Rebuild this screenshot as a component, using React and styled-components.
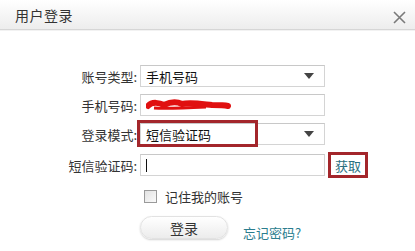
import React from 'react';
import styled, { createGlobalStyle } from 'styled-components';

const GlobalStyle = createGlobalStyle`
  html, body {
    margin: 0;
    padding: 0;
    background: #fff;
  }
  body {
    font-family: "Noto Sans CJK SC", "Liberation Sans", sans-serif;
    color: #333;
  }
`;

const Dialog = styled.div`
  width: 415px;
  height: 251px;
  background: #fff;
  overflow: hidden;
`;

const Header = styled.header`
  height: 29px;
  display: flex;
  align-items: center;
  justify-content: space-between;
  padding: 0 8px 0 15px;
  background: linear-gradient(#ffffff, #ededed);
  border-bottom: 1px solid #d6d6d6;
  box-shadow: 0 1px 0 #f2f2f2;
`;

const Title = styled.h1`
  margin: 0;
  font-size: 14px;
  font-weight: normal;
  color: #333;
  letter-spacing: 0.5px;
`;

const Close = styled.button`
  border: 0;
  background: none;
  padding: 0;
  width: 14px;
  height: 14px;
  margin-top: 6px;
  display: flex;
  cursor: pointer;
`;

const Form = styled.div`
  display: grid;
  grid-template-columns: 137px 185px auto;
  column-gap: 3px;
  row-gap: 7px;
  padding-top: 35px;
  align-items: center;
`;

const Label = styled.label`
  justify-self: end;
  font-size: 13px;
  color: #333;
  white-space: nowrap;
`;

const Field = styled.div`
  position: relative;
  height: 20px;
  border: 1px solid #d4d4d4;
  border-top-color: #c8c8c8;
  background: #fff;
  display: flex;
  align-items: center;
  padding: 0 10px 0 5px;
  font-size: 13px;
  color: #111;
`;

const Arrow = styled.span`
  margin-left: auto;
  width: 0;
  height: 0;
  border-left: 5px solid transparent;
  border-right: 5px solid transparent;
  border-top: 6px solid #444;
`;

const Highlight = styled.span`
  position: absolute;
  left: -4px;
  top: -4px;
  width: 115px;
  height: 21px;
  border: 3px solid #a3262b;
  pointer-events: none;
`;

const Caret = styled.span`
  width: 1px;
  height: 13px;
  background: #111;
`;

const GetButton = styled.button`
  justify-self: start;
  width: 40px;
  height: 26px;
  border: 3px solid #a3262b;
  background: #fff;
  color: #2a6f80;
  font-family: inherit;
  font-size: 13px;
  padding: 0;
`;

const Remember = styled.label`
  grid-column: 2 / 4;
  display: flex;
  align-items: center;
  gap: 8px;
  padding-left: 4px;
  margin-top: 2px;
  font-size: 13px;
  color: #333;
`;

const Box = styled.span`
  width: 11px;
  height: 11px;
  border: 1px solid #9a9a9a;
  background: linear-gradient(135deg, #e2e2e2, #fafafa);
`;

const Actions = styled.div`
  grid-column: 2 / 4;
  display: flex;
  align-items: flex-end;
  gap: 15px;
  margin-top: 3px;
`;

const LoginButton = styled.button`
  width: 88px;
  height: 23px;
  border: 1px solid #e2e2e2;
  border-radius: 12px;
  background: linear-gradient(#ffffff, #ececec);
  box-shadow: 0 1px 2px rgba(0, 0, 0, 0.18);
  font-family: inherit;
  font-size: 14px;
  color: #333;
  padding: 0;
`;

const Forgot = styled.a`
  font-size: 13px;
  color: #2a7d8e;
  text-decoration: none;
  margin-bottom: -3px;
`;

const Scribble = () => (
  <svg width="86" height="14" viewBox="0 0 86 14">
    <path
      d="M2 8 C6 3 14 5 18 7 C24 4 30 3 36 6 C44 4 56 6 66 7 C72 7 78 7 82 8"
      stroke="#e01010"
      strokeWidth="6"
      strokeLinecap="round"
      fill="none"
    />
    <path d="M8 10 C20 11 40 10 60 9" stroke="#e01010" strokeWidth="3" fill="none" />
  </svg>
);

export default function App() {
  return (
    <Dialog>
      <GlobalStyle />
      <Header>
        <Title>用户登录</Title>
        <Close aria-label="关闭">
          <svg width="13" height="13" viewBox="0 0 13 13">
            <path d="M1 1 L12 12 M12 1 L1 12" stroke="#7a7a7a" strokeWidth="1.6" />
          </svg>
        </Close>
      </Header>
      <Form>
        <Label>账号类型:</Label>
        <Field>
          手机号码
          <Arrow />
        </Field>
        <span />

        <Label>手机号码:</Label>
        <Field>
          <Scribble />
        </Field>
        <span />

        <Label>登录模式:</Label>
        <Field>
          短信验证码
          <Arrow />
          <Highlight />
        </Field>
        <span />

        <Label>短信验证码:</Label>
        <Field>
          <Caret />
        </Field>
        <GetButton>获取</GetButton>

        <span />
        <Remember>
          <Box />
          记住我的账号
        </Remember>

        <span />
        <Actions>
          <LoginButton>登录</LoginButton>
          <Forgot href="#">忘记密码?</Forgot>
        </Actions>
      </Form>
    </Dialog>
  );
}
